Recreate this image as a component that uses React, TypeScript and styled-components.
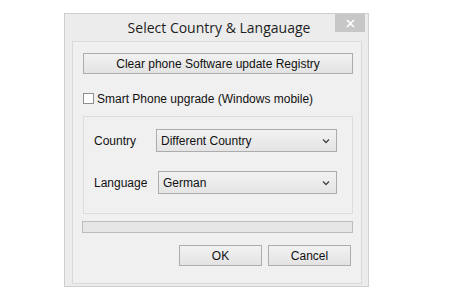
import styled, { createGlobalStyle } from 'styled-components';

const GlobalStyle = createGlobalStyle`
  html, body {
    margin: 0;
    padding: 0;
    background: #ffffff;
  }
  body {
    font-family: "Liberation Sans", Arial, sans-serif;
  }
`;

const Page = styled.div`
  width: 450px;
  height: 300px;
  padding: 13px 0 0 64px;
  box-sizing: border-box;
`;

const Window = styled.div`
  width: 305px;
  height: 274px;
  box-sizing: border-box;
  background: #ececec;
  border: 1px solid #cfcfcf;
  display: flex;
  flex-direction: column;
  padding: 0 6px 2px 7px;
`;

const TitleBar = styled.div`
  height: 27px;
  display: flex;
  align-items: center;
  position: relative;
`;

const Title = styled.div`
  flex: 1;
  text-align: center;
  font-family: "Open Sans", "Noto Sans", sans-serif;
  font-size: 14px;
  color: #1e1e1e;
  padding-left: 4px;
`;

const CloseButton = styled.div`
  position: absolute;
  right: -3px;
  top: 0;
  width: 30px;
  height: 18px;
  background: #c7c7c7;
  display: flex;
  align-items: center;
  justify-content: center;
`;

const Client = styled.div`
  flex: 1;
  background: #f0f0f0;
  border: 1px solid #dadada;
  display: flex;
  flex-direction: column;
  padding: 11px 8px 0 10px;
  font-size: 12px;
  color: #111;
`;

const Button = styled.div<{ $width?: number }>`
  height: 21px;
  width: ${p => (p.$width ? `${p.$width}px` : 'auto')};
  box-sizing: border-box;
  border: 1px solid #adadad;
  background: linear-gradient(#f2f2f2, #e3e3e3);
  display: flex;
  align-items: center;
  justify-content: center;
  font-size: 12px;
  color: #111;
`;

const CheckRow = styled.label`
  display: flex;
  align-items: center;
  gap: 3px;
  margin-top: 18px;
  height: 13px;
`;

const CheckBox = styled.span`
  width: 11px;
  height: 11px;
  border: 1px solid #8f8f8f;
  background: #ffffff;
  box-sizing: border-box;
`;

const Group = styled.div`
  margin-top: 11px;
  height: 98px;
  box-sizing: border-box;
  border: 1px solid #dcdcdc;
  padding: 12px 15px 0 10px;
  display: flex;
  flex-direction: column;
  gap: 19px;
`;

const FieldRow = styled.div`
  display: flex;
  align-items: center;
`;

const FieldLabel = styled.span<{ $width: number }>`
  width: ${p => p.$width}px;
  font-size: 12px;
`;

const Select = styled.div`
  flex: 1;
  height: 23px;
  box-sizing: border-box;
  border: 1px solid #acacac;
  background: linear-gradient(#f2f2f2, #e4e4e4);
  display: flex;
  align-items: center;
  justify-content: space-between;
  padding: 0 6px 0 4px;
  font-size: 12px;
`;

const Progress = styled.div`
  margin: 7px 0 0 -1px;
  height: 12px;
  box-sizing: border-box;
  border: 1px solid #bcbcbc;
  background: #e6e6e6;
`;

const Footer = styled.div`
  margin-top: 12px;
  display: flex;
  justify-content: flex-end;
  gap: 6px;
  padding-right: 2px;
`;

const Chevron = () => (
  <svg width="8" height="6" viewBox="0 0 8 6">
    <path d="M1 1.5 L4 4.5 L7 1.5" fill="none" stroke="#444" strokeWidth="1.3" />
  </svg>
);

export default function App() {
  return (
    <Page>
      <GlobalStyle />
      <Window>
        <TitleBar>
          <Title>Select Country &amp; Langauage</Title>
          <CloseButton>
            <svg width="9" height="9" viewBox="0 0 9 9">
              <path d="M1 1 L8 8 M8 1 L1 8" stroke="#ffffff" strokeWidth="1.6" />
            </svg>
          </CloseButton>
        </TitleBar>
        <Client>
          <Button>Clear phone Software update Registry</Button>
          <CheckRow>
            <CheckBox />
            Smart Phone upgrade (Windows mobile)
          </CheckRow>
          <Group>
            <FieldRow>
              <FieldLabel $width={62}>Country</FieldLabel>
              <Select>
                Different Country
                <Chevron />
              </Select>
            </FieldRow>
            <FieldRow>
              <FieldLabel $width={64}>Language</FieldLabel>
              <Select>
                German
                <Chevron />
              </Select>
            </FieldRow>
          </Group>
          <Progress />
          <Footer>
            <Button $width={83}>OK</Button>
            <Button $width={83}>Cancel</Button>
          </Footer>
        </Client>
      </Window>
    </Page>
  );
}
